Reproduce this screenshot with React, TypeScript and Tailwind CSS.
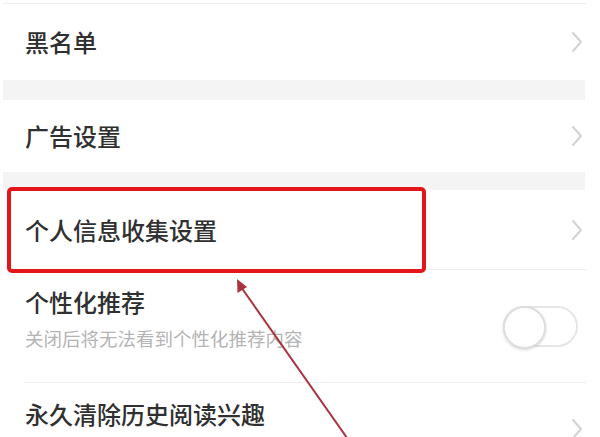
import React from "react";

const Chevron = () => (
  <svg width="14" height="22" viewBox="0 0 14 22" className="shrink-0">
    <polyline points="3,2 11,11 3,20" fill="none" stroke="#d2d2d2" strokeWidth="2" strokeLinecap="round" strokeLinejoin="round" />
  </svg>
);

export default function App() {
  return (
    <div
      className="relative w-[600px] h-[437px] overflow-hidden bg-white text-[#303030]"
      style={{ fontFamily: '"Noto Sans CJK SC", "Noto Sans", sans-serif' }}
    >
      <div className="h-[3px]" />
      <div className="mx-[3px] w-[583px] border-t border-[#ededed]" />
      {/* Row 1 */}
      <div className="flex h-[76px] items-center justify-between pl-[25px] pr-[16px] w-[600px]">
        <span className="text-[24px] font-medium leading-none">黑名单</span>
        <Chevron />
      </div>
      <div className="ml-[3px] h-[20px] w-[582px] bg-[#f4f4f4]" />
      {/* Row 2 */}
      <div className="flex h-[72px] items-center justify-between pl-[25px] pr-[16px]">
        <span className="text-[24px] font-medium leading-none">广告设置</span>
        <Chevron />
      </div>
      <div className="ml-[3px] h-[18px] w-[582px] bg-[#f4f4f4]" />
      {/* Row 3 */}
      <div className="flex h-[79px] items-center justify-between pl-[25px] pr-[16px]">
        <span className="text-[24px] font-medium leading-none">个人信息收集设置</span>
        <Chevron />
      </div>
      <div className="ml-[24px] w-[563px] border-t border-[#eeeeee]" />
      {/* Row 4 */}
      <div className="flex h-[112px] items-center justify-between pl-[25px] pr-[22px]">
        <div className="flex flex-col">
          <span className="text-[24px] font-medium leading-none mt-[-14px]">个性化推荐</span>
          <span className="mt-[15px] text-[18.5px] leading-none text-[#b4b4b4]">关闭后将无法看到个性化推荐内容</span>
        </div>
        <div className="relative h-[41px] w-[75px] rounded-full border-2 border-[#e6e6e6] bg-white">
          <div className="absolute left-[-2px] top-[-2px] h-[43px] w-[43px] rounded-full border-2 border-[#dedede] bg-white shadow-[0_1px_3px_rgba(0,0,0,0.15)]" />
        </div>
      </div>
      <div className="ml-[24px] w-[563px] border-t border-[#eeeeee]" />
      {/* Row 5 */}
      <div className="flex h-[62px] items-center justify-between pl-[25px] pr-[16px]">
        <span className="text-[24px] font-medium leading-none mt-[-1px]">永久清除历史阅读兴趣</span>
        <div className="mt-[30px]"><Chevron /></div>
      </div>

      {/* Red highlight box */}
      <div className="pointer-events-none absolute left-[7px] top-[187px] h-[86px] w-[419px] rounded-[5px] border-[4px] border-[#e3161b]" />

      {/* Arrow */}
      <svg className="pointer-events-none absolute left-0 top-0" width="600" height="437" viewBox="0 0 600 437">
        <line x1="352" y1="445" x2="241" y2="287" stroke="#a8343f" strokeWidth="2" />
        <polygon points="237,279 237.5,293 247,287" fill="#a8343f" />
      </svg>
    </div>
  );
}
